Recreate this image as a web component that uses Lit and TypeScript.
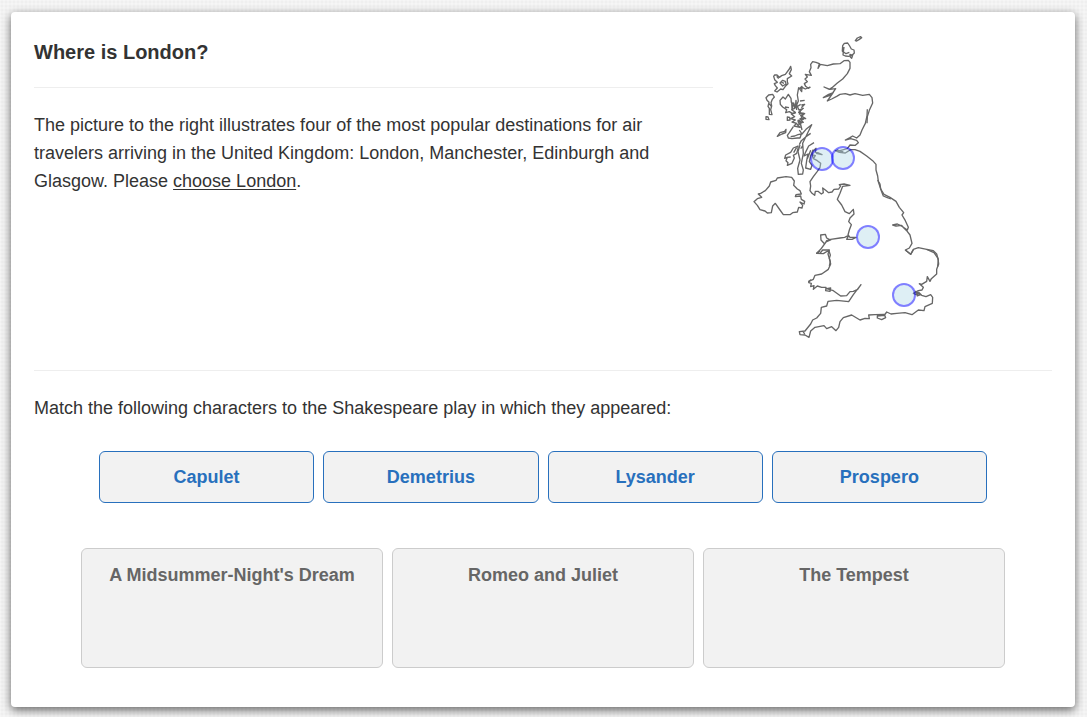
import { LitElement, html, css, svg } from "lit";
import { customElement } from "lit/decorators.js";

interface City { name: string; x: number; y: number; }

const cities: City[] = [
  { name: "Glasgow", x: 82, y: 134 },
  { name: "Edinburgh", x: 103, y: 133 },
  { name: "Manchester", x: 128, y: 212 },
  { name: "London", x: 164, y: 270 },
];
const characters = ["Capulet", "Demetrius", "Lysander", "Prospero"];
const plays = ["A Midsummer-Night's Dream", "Romeo and Juliet", "The Tempest"];

/* Coastline, in thirds of a pixel, one group per region. */
const coast = svg`
  <g>
    <path d="M346 47L352 39L362 35L365 38L358 43L350 48z M308 62L313 55L323 54L329 63L334 72L342 75L343 84L337 90L326 94L316 93L309 90L310 82L307 78z M312 66L310 80L318 86L328 82M330 88L338 91L335 100L331 96z" />
    <path d="M211 186L205 190L197 184L193 176L202 170L195 162L202 156L196 148L214 151L208 140L213 128L212 118L218 110L228 112L238 116L234 130L241 118L262 122L280 117L300 116L312 107L325 106L330 112L330 130L322 146L308 162L292 174L276 188L268 193L252 186L270 193L287 191L278 204L266 208L250 218L268 212L280 202L262 228L275 222L290 214L300 208L316 206L330 210L345 206L368 211L388 208L396 218L398 234L388 256L382 275L381 295" />
    <path d="M211 186L196 192L188 188L178 191L186 184L185 200L176 188L172 210L175 228L170 240L177 255L190 250L176 262L194 266L182 272L197 281L180 281L190 292L174 290L182 301M180 228L194 226M184 240L194 238L184 248M170 246L182 238" />
    <path d="M152 124L154 134L148 146L155 153L142 161L142 170L144 176L136 184L129 194L122 192L111 201L104 198L112 189L106 182L103 176L112 172L104 164L101 154L104 150L111 150L118 157L125 152L136 148L148 132z M110 154L116 161M120 174L128 166L136 169L138 177L128 183z M124 171L132 175" />
    <path d="M78 218L86 210L98 208L103 216L97 223L93 233L95 243L92 254L96 269L88 268L88 250L84 244L87 232L81 226z M87 236L94 244 M78 275L84 276L87 284L78 283z M142 276L149 277L150 285L142 286z" />
    <path d="M120 226L129 216L136 222L145 208L153 220L154 232L162 238L164 250L155 254L166 262L158 266L148 260L137 263L140 254L128 246L121 238z M155 230L156 252L161 234L166 248L168 226L170 255M135 246L147 248" />
  </g>
  <g transform="translate(0 255)">
    <path d="M182 0L178 12L192 10L184 22L190 28L174 31L186 38L172 44L180 52L162 48L170 40L156 36L166 30L152 26L164 20L154 12L168 8M180 36L186 60M160 50L148 68L142 76L145 84L156 86L172 84L180 84L184 72L174 74L164 78L152 80M112 79L120 68L134 64L138 58L137 68L126 72z" />
    <path d="M180 105L174 125L180 150L173 175L175 193L188 192L190 180L184 160L190 130L188 100L200 75L215 44L198 58L186 72L178 60M212 70L198 80L184 92L178 104M188 108L182 116" />
    <path d="M174 108L160 114L152 127L137 135L134 145L142 142L138 152L144 158L142 166L156 160L163 144L160 136L170 130L174 116z M170 112L161 128 M140 142L152 141" />
    <path d="M222 98L206 108L198 124L192 138L204 132L200 152L197 174L212 178L216 166L208 155L212 137L219 120L217 134L220 146L226 137L216 134L219 124L228 115L226 127L236 129L246 134L228 130M212 121L202 146M219 145L232 152L242 160L240 172L232 184L220 200L210 215L212 228" />
    <path d="M382 -2L381 18L376 40L366 60L360 75L350 84L338 78L330 83L316 90L332 86L350 91L355 98L346 106L330 105L322 116L300 122L286 122L298 127L316 129L332 119L345 119L360 124L380 138L398 152L408 163L408 180L413 198L415 215L425 245L430 258L440 262L453 267M290 120L310 126" />
    <path d="M62 250L76 242L88 228L92 216L108 211L112 204L138 200L155 202L163 213L161 226L172 237L180 242L184 252L168 254L166 260L182 258L184 268L194 274L192 282L180 276L188 286L186 294L176 292L172 306L158 308L150 314L130 314L120 300L106 280L98 288L94 308L82 309L75 303L60 299L52 286L42 275L52 266L65 262L55 252z" />
  </g>
  <g transform="translate(150 465)">
    <path d="M263 0L270 12L272 27L282 43L300 52L318 64L328 82L341 98L336 105L346 122L355 142L352 150L340 142L335 136L318 138L308 135L322 132L338 140L350 152L360 165L366 190L358 204L346 210L362 223L370 208L385 203L410 208L430 212L440 222L445 240L443 260" />
    <path d="M62 18L60 32L66 40L74 46L76 34L84 34L94 42L100 38L98 24L107 31L116 38L126 36L132 28L146 27L152 18L148 14L162 12L180 16L158 19L150 40L142 58L155 75L165 95L178 101L190 88L192 102L180 114L176 125L184 134L178 150L174 165L180 172L198 172L186 178L170 178L176 166L164 172L150 174L122 178L110 182L104 192L93 180L92 165L106 163L110 174L122 180L108 186L92 208L80 220L100 221L118 210L114 222L121 245L118 258" />
  </g>
  <g transform="translate(150 675)">
    <path d="M346 0L362 13L370 0M410 -2L432 8L444 25L446 42L440 58L440 72L424 86L420 94L412 80L410 94L395 103L388 101L400 112L396 120L385 122L370 130L385 136L376 124L392 134L380 138M385 126L395 136L408 140L422 134L428 142L427 160L405 170L402 182L385 180L366 194L345 188L320 190L303 192L290 186L283 196L262 198L262 204L275 209L287 203L283 193L255 194L236 195L238 206L225 205L210 210L185 195L160 203L150 215L146 232L138 242L125 230L110 236L102 227L75 232L62 243L57 262L45 255L30 254L28 245L45 243L62 222L68 210L80 204L92 190L94 172L110 168L114 154L140 151L176 155L190 134L213 104L203 118L190 124L180 125L170 137L152 138L130 122L110 116L122 114L120 124L107 122L108 112L95 112L82 108L70 118L72 107L62 110L64 100L56 98L62 90L56 94L70 88L75 76L95 72L115 58L122 42L118 25L121 15L116 0M118 0L98 0L90 10L80 10L90 3M39 244L44 252" />
  </g>
`;

@customElement("app-root")
export class AppRoot extends LitElement {
  static styles = css`
    :host {
      display: block;
      box-sizing: border-box;
      min-height: 100vh;
      padding: 12px 12px 10px 11px;
      background-color: #f3f3f3;
      background-image: radial-gradient(#efefef 1px, transparent 1px), radial-gradient(#f6f6f6 1px, transparent 1px);
      background-size: 4px 4px;
      background-position: 0 0, 2px 2px;
      color: #333;
      font: 18px/27px "Liberation Sans", Arial, sans-serif;
    }
    * { box-sizing: border-box; }
    .card {
      background: #fff;
      border-radius: 4px;
      padding: 13px 23px 39px;
      box-shadow: 0 3px 10px rgba(0, 0, 0, 0.6);
    }
    .intro {
      display: grid;
      grid-template-columns: 2fr 1fr;
      border-bottom: 1px solid #eee;
      padding-bottom: 25px;
    }
    h1 {
      margin: 0;
      padding: 14px 0 21px;
      border-bottom: 1px solid #eee;
      font-size: 20px;
      line-height: 27px;
    }
    .intro p { margin: 23px 0 0; padding-right: 24px; line-height: 28px; }
    a { color: inherit; text-decoration: underline; text-underline-offset: 2px; }
    .map { position: relative; width: 210px; height: 320px; margin-left: 27px; }
    .map svg { display: block; width: 100%; height: 100%; fill: none; stroke: #333; stroke-width: 4; stroke-linejoin: round; opacity: 0.75; }
    .pin {
      position: absolute;
      width: 24px;
      height: 24px;
      padding: 0;
      transform: translate(-50%, -50%);
      border: 2px solid rgba(0, 0, 255, 0.5);
      border-radius: 50%;
      background: rgba(173, 216, 230, 0.4);
      background-clip: padding-box;
      cursor: pointer;
    }
    .prompt { margin: 24px 0 29px; }
    .characters {
      display: grid;
      grid-template-columns: repeat(4, 1fr);
      gap: 9px;
      margin: 0 65px 45px;
    }
    .character {
      height: 52px;
      padding: 0;
      border: 1px solid #2870bd;
      border-radius: 6px;
      background: #f2f2f2;
      color: #2870bd;
      font: bold 18px/27px "Liberation Sans", Arial, sans-serif;
      cursor: pointer;
    }
    .plays {
      display: grid;
      grid-template-columns: repeat(3, 1fr);
      gap: 9px;
      margin: 0 47px;
    }
    .play {
      min-height: 120px;
      padding: 13px 12px;
      border: 1px solid #ccc;
      border-radius: 6px;
      background: #f2f2f2;
    }
    h2 { margin: 0; color: #666; font-size: 18px; line-height: 27px; text-align: center; }
  `;

  render() {
    return html`
      <main class="card">
        <section class="intro">
          <div>
            <h1>Where is London?</h1>
            <p>The picture to the right illustrates four of the most popular destinations for air travelers arriving in the United Kingdom: London, Manchester, Edinburgh and Glasgow. Please <a href="#london">choose London</a>.</p>
          </div>
          <div class="map">
            <svg viewBox="0 0 630 960" aria-hidden="true">${coast}</svg>
            ${cities.map((c) => html`<button class="pin" type="button" aria-label=${c.name} style="left:${c.x}px;top:${c.y}px"></button>`)}
          </div>
        </section>
        <section>
          <p class="prompt">Match the following characters to the Shakespeare play in which they appeared:</p>
          <div class="characters">
            ${characters.map((name) => html`<button class="character" type="button">${name}</button>`)}
          </div>
          <div class="plays">
            ${plays.map((title) => html`<div class="play"><h2>${title}</h2></div>`)}
          </div>
        </section>
      </main>
    `;
  }
}
